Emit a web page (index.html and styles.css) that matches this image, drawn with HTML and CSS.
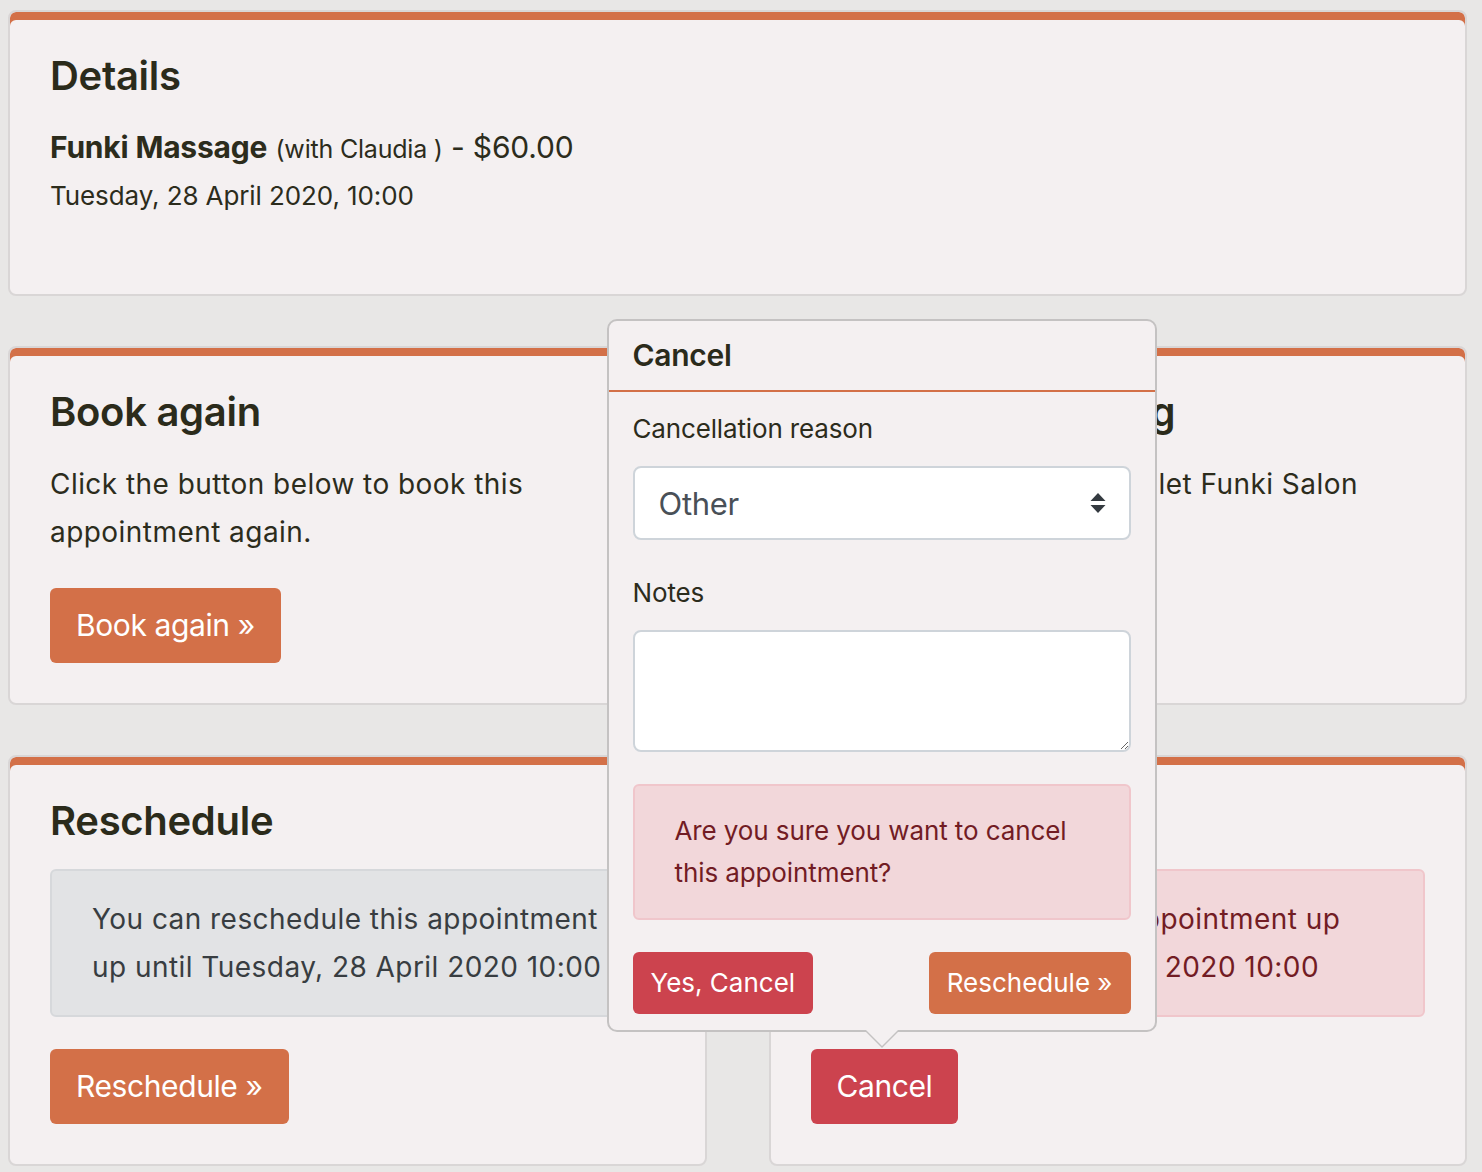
FILE: index.html
```html
<!DOCTYPE html>
<html lang="en">
<head>
<meta charset="utf-8">
<title>Appointment</title>
<link rel="stylesheet" href="styles.css">
</head>
<body>
<div class="page">
  <section class="card">
    <h2 class="card-title">Details</h2>
    <div class="svc"><strong>Funki Massage</strong> <small>(with Claudia )</small> - $60.00</div>
    <div class="when">Tuesday, 28 April 2020, 10:00</div>
  </section>

  <div class="row">
    <section class="card">
      <h2 class="card-title">Book again</h2>
      <p class="text">Click the button below to book this appointment again.</p>
      <a class="btn btn-orange">Book again »</a>
    </section>
    <section class="card">
      <h2 class="card-title">Cancel my booking</h2>
      <p class="text">Click the button below to let Funki Salon cancel this appointment.</p>
    </section>
  </div>

  <div class="row">
    <section class="card">
      <h2 class="card-title">Reschedule</h2>
      <div class="alert alert-secondary">You can reschedule this appointment up until Tuesday, 28 April 2020 10:00</div>
      <a class="btn btn-orange">Reschedule »</a>
    </section>
    <section class="card">
      <h2 class="card-title">Cancel</h2>
      <div class="alert alert-danger">You can cancel this appointment up until Tuesday, 28 April 2020 10:00</div>
      <div class="pop-anchor">
        <a class="btn btn-red">Cancel</a>
        <div class="popover">
          <div class="popover-header">Cancel</div>
          <div class="popover-body">
            <div class="form-group">
              <label class="label" for="reason">Cancellation reason</label>
              <div class="select-wrap">
                <select id="reason" class="select">
                  <option>Other</option>
                </select>
                <svg class="select-arrow" width="16" height="20" viewBox="0 0 16 20"><path d="M8 0 L15.5 8 H0.5 Z M0.5 12 H15.5 L8 20 Z" fill="#343a40"/></svg>
              </div>
            </div>
            <div class="form-group">
              <label class="label" for="notes">Notes</label>
              <textarea id="notes" class="textarea"></textarea>
            </div>
            <div class="alert alert-danger pop-alert">Are you sure you want to cancel this appointment?</div>
            <div class="pop-actions">
              <a class="btn btn-sm btn-red">Yes, Cancel</a>
              <a class="btn btn-sm btn-orange">Reschedule »</a>
            </div>
          </div>
        </div>
      </div>
    </section>
  </div>
</div>
</body>
</html>
```

FILE: styles.css
```css
* { box-sizing: border-box; }
html, body { margin: 0; }
body {
  background: #e8e7e6;
  font-family: Inter, "Liberation Sans", sans-serif;
  color: #2c2c1c;
}
.page {
  padding: 10px 15px 0 8px;
  display: flex;
  flex-direction: column;
  gap: 50px;
}
.row {
  display: grid;
  grid-template-columns: 1fr 1fr;
  gap: 62px;
}
.card {
  background: #f4f0f1;
  border: 2px solid #d9d6d6;
  border-radius: 8px;
  box-shadow: inset 0 8px 0 #d37048;
  padding: 40px;
}
.card-title {
  font-size: 40px;
  font-weight: 600;
  line-height: 48px;
  letter-spacing: -0.3px;
  margin: 0 0 24px;
  color: #2b2b1b;
}
.svc {
  font-size: 30px;
  line-height: 46px;
  letter-spacing: -0.2px;
}
.svc strong { font-weight: 700; }
.svc small { font-size: 25px; }
.when {
  font-size: 26px;
  line-height: 47px;
  letter-spacing: -0.1px;
  margin-bottom: 35px;
}
.text {
  font-size: 28px;
  line-height: 48px;
  letter-spacing: 0.45px;
  margin: 0 0 32px;
}
.btn {
  display: inline-block;
  font-size: 30px;
  line-height: 43px;
  letter-spacing: -0.4px;
  padding: 16px 26px;
  border-radius: 6px;
  color: #fff;
  text-decoration: none;
}
.btn-orange { background: #d37048; }
.btn-red { background: #cc434e; }
.alert {
  border: 2px solid transparent;
  border-radius: 6px;
  padding: 24px 40px;
  font-size: 28px;
  line-height: 48px;
  letter-spacing: 0.45px;
  margin-bottom: 32px;
}
.alert-secondary {
  background: #e2e3e5;
  border-color: #d6d8db;
  color: #383d41;
}
.alert-danger {
  background: #f2d7da;
  border-color: #f0c6cb;
  color: #721c24;
}
.pop-anchor {
  position: relative;
  display: inline-block;
}
.popover {
  position: absolute;
  bottom: calc(100% + 17px);
  left: -204px;
  width: 550px;
  background: #f4f0f1;
  border: 2px solid #c4c2c2;
  border-radius: 10px;
}
.popover::before {
  content: "";
  position: absolute;
  left: 273px;
  top: calc(100% + 2px);
  margin-left: -16px;
  border-style: solid;
  border-width: 16px 16px 0;
  border-color: #c4c2c2 transparent transparent;
}
.popover::after {
  content: "";
  position: absolute;
  left: 273px;
  top: 100%;
  margin-left: -16px;
  border-style: solid;
  border-width: 16px 16px 0;
  border-color: #f4f0f1 transparent transparent;
}
.popover-header {
  padding: 16px 24px;
  font-size: 30px;
  font-weight: 600;
  line-height: 37px;
  letter-spacing: -0.3px;
  border-bottom: 2px solid #d37048;
  color: #2b2b1b;
}
.popover-body {
  padding: 16px 24px;
  letter-spacing: -0.15px;
}
.form-group { margin-bottom: 32px; }
.label {
  display: block;
  font-size: 26px;
  line-height: 42px;
  margin-bottom: 16px;
}
.select-wrap { position: relative; }
.select {
  display: block;
  width: 100%;
  height: 74px;
  appearance: none;
  -webkit-appearance: none;
  border: 2px solid #ced4da;
  border-radius: 8px;
  background: #fff;
  font-family: Inter, "Liberation Sans", sans-serif;
  font-size: 31px;
  letter-spacing: -0.3px;
  color: #495057;
  padding: 0 24px;
  outline: none;
}
.select-arrow {
  position: absolute;
  right: 25px;
  top: 50%;
  transform: translateY(-50%);
}
.textarea {
  display: block;
  width: 100%;
  height: 122px;
  border: 2px solid #ced4da;
  border-radius: 8px;
  background: #fff;
  resize: vertical;
  outline: none;
}
.pop-alert {
  font-size: 26px;
  line-height: 42px;
  letter-spacing: -0.1px;
}
.pop-actions {
  display: flex;
  justify-content: space-between;
}
.btn-sm {
  font-size: 26px;
  line-height: 32px;
  letter-spacing: 0;
  padding: 15px 18px;
}
```
